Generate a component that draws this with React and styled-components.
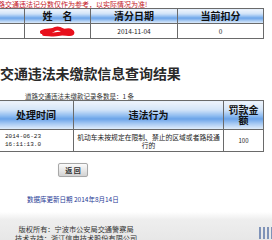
import React from "react";
import styled, { createGlobalStyle } from "styled-components";

const Global = createGlobalStyle`
  html, body { margin: 0; padding: 0; background: #fff; overflow: hidden; }
  body { font-family: "Noto Sans CJK SC", "Noto Sans", sans-serif; }
`;

const headGradient = `linear-gradient(to bottom, #eef4fc 0%, #d3e4f8 30%, #8dbbf0 52%, #6aa3e8 62%, #a9cbf3 80%, #e6f0fb 100%)`;

const Page = styled.div`
  width: 272px;
  height: 240px;
  overflow: hidden;
  display: flex;
  flex-direction: column;
`;

const Notice = styled.div`
  font-size: 7px;
  line-height: 8px;
  height: 8px;
  color: #c4141e;
  margin-left: -9px;
  white-space: nowrap;
`;

const Table = styled.table`
  border-collapse: collapse;
  table-layout: fixed;
  margin-left: ${(p) => p.$offset}px;
  width: ${(p) => p.$width}px;
  border: 1px solid #6a6a6a;
`;

const Head = styled.th`
  background: ${headGradient};
  border: 1px solid #6a6a6a;
  font-weight: bold;
  font-size: 10px;
  line-height: 10px;
  color: #111;
  padding: 0 2px;
  height: ${(p) => p.$h}px;
  text-align: center;
  white-space: ${(p) => (p.$wrap ? "normal" : "nowrap")};
`;

const Cell = styled.td`
  border: 1px solid #6a6a6a;
  font-size: ${(p) => p.$size || 6.5}px;
  line-height: 8px;
  color: #222;
  height: ${(p) => p.$h}px;
  padding: ${(p) => (p.$left ? "0 0 0 6px" : "0 1px")};
  text-align: ${(p) => (p.$left ? "left" : "center")};
  font-family: ${(p) =>
    p.$mono ? '"Liberation Mono", monospace' : '"Noto Sans CJK SC", sans-serif'};
  vertical-align: middle;
`;

const Title = styled.h1`
  margin: 25px 0 0 0;
  font-size: 14px;
  line-height: 18px;
  font-weight: bold;
  color: #2a2a2a;
  white-space: nowrap;
  letter-spacing: -0.1px;
`;

const Count = styled.div`
  margin: 10px 0 0 25px;
  font-size: 6.5px;
  line-height: 8px;
  color: #333;
  white-space: nowrap;
`;

const Button = styled.button`
  align-self: flex-start;
  margin: 11px 0 0 58px;
  width: 30px;
  height: 14px;
  padding: 0;
  border: 1px solid #a8a8a8;
  border-radius: 2px;
  background: linear-gradient(to bottom, #fbfbfb 0%, #e6e6e6 55%, #d2d2d2 100%);
  font-family: "Noto Sans CJK SC", sans-serif;
  font-size: 7px;
  font-weight: bold;
  color: #333;
  line-height: 12px;
  box-shadow: 0 0 1px rgba(0, 0, 0, 0.15);
`;

const Updated = styled.div`
  margin: 18px 0 0 27px;
  font-size: 6.5px;
  line-height: 8px;
  color: #1f3a96;
  white-space: nowrap;
`;

const Footer = styled.footer`
  margin-top: 9px;
  flex: 1;
  background: linear-gradient(to bottom, #ffffff 0%, #eeeeee 25%, #e6e6e6 100%);
  display: flex;
  justify-content: space-between;
  padding: 13px 0 0 15px;
`;

const FooterText = styled.div`
  font-size: 7.2px;
  line-height: 9px;
  color: #333;
  white-space: nowrap;
  text-align: center;
`;

const Bars = styled.svg`
  margin: 2px 0 0 0;
  flex: none;
`;

const Scribble = () => (
  <svg width="36" height="12" viewBox="0 0 36 12" style={{ display: "block", margin: "0 auto 0 14px" }}>
    <path
      d="M2 7 C6 5, 10 6, 13 5 C16 3, 19 3, 22 5 C25 7, 28 4, 31 6 C33 7, 33 9, 30 9 C26 9, 22 8, 18 9 C14 10, 9 9, 4 9"
      fill="none"
      stroke="#e8101c"
      strokeWidth="4"
      strokeLinecap="round"
      strokeLinejoin="round"
    />
  </svg>
);

export default function App() {
  return (
    <Page>
      <Global />
      <Notice>道路交通违法记分数仅作为参考，以实际情况为准!</Notice>
      <Table $offset={-10} $width={273}>
        <colgroup>
          <col style={{ width: 34 }} />
          <col style={{ width: 66 }} />
          <col style={{ width: 87 }} />
          <col style={{ width: 86 }} />
        </colgroup>
        <thead>
          <tr>
            <Head $h={14}></Head>
            <Head $h={14}>姓　名</Head>
            <Head $h={14}>清分日期</Head>
            <Head $h={14}>当前扣分</Head>
          </tr>
        </thead>
        <tbody>
          <tr>
            <Cell $h={14}></Cell>
            <Cell $h={14}>
              <Scribble />
            </Cell>
            <Cell $h={14} $size={6.5}>2014-11-04</Cell>
            <Cell $h={14} $size={6.5}>0</Cell>
          </tr>
        </tbody>
      </Table>
      <Title>交通违法未缴款信息查询结果</Title>
      <Count>道路交通违法未缴款记录条数是：1 条</Count>
      <Table $offset={-2} $width={265}>
        <colgroup>
          <col style={{ width: 75 }} />
          <col style={{ width: 150 }} />
          <col style={{ width: 40 }} />
        </colgroup>
        <thead>
          <tr>
            <Head $h={28}>处理时间</Head>
            <Head $h={28}>违法行为</Head>
            <Head $h={28} $wrap>罚款金额</Head>
          </tr>
        </thead>
        <tbody>
          <tr>
            <Cell $h={21} $left $mono $size={6}>
              2014-06-23
              <br />
              16:11:13.0
            </Cell>
            <Cell $h={21} $size={6.8}>机动车未按规定在限制、禁止的区域或者路段通行的</Cell>
            <Cell $h={21} $size={6}>100</Cell>
          </tr>
        </tbody>
      </Table>
      <Button>返 回</Button>
      <Updated>数据库更新日期 2014年8月14日</Updated>
      <Footer>
        <FooterText>
          版权所有：宁波市公安局交通警察局
          <br />
          技术支持：浙江信电技术股份有限公司
        </FooterText>
        <Bars width="14" height="12" viewBox="0 0 14 12">
          <rect x="1" y="0" width="2" height="12" fill="#7f93b8" />
          <rect x="5" y="0" width="2" height="12" fill="#7f93b8" />
          <rect x="9" y="0" width="2" height="12" fill="#7f93b8" />
          <rect x="13" y="0" width="1" height="12" fill="#7f93b8" />
        </Bars>
      </Footer>
    </Page>
  );
}
